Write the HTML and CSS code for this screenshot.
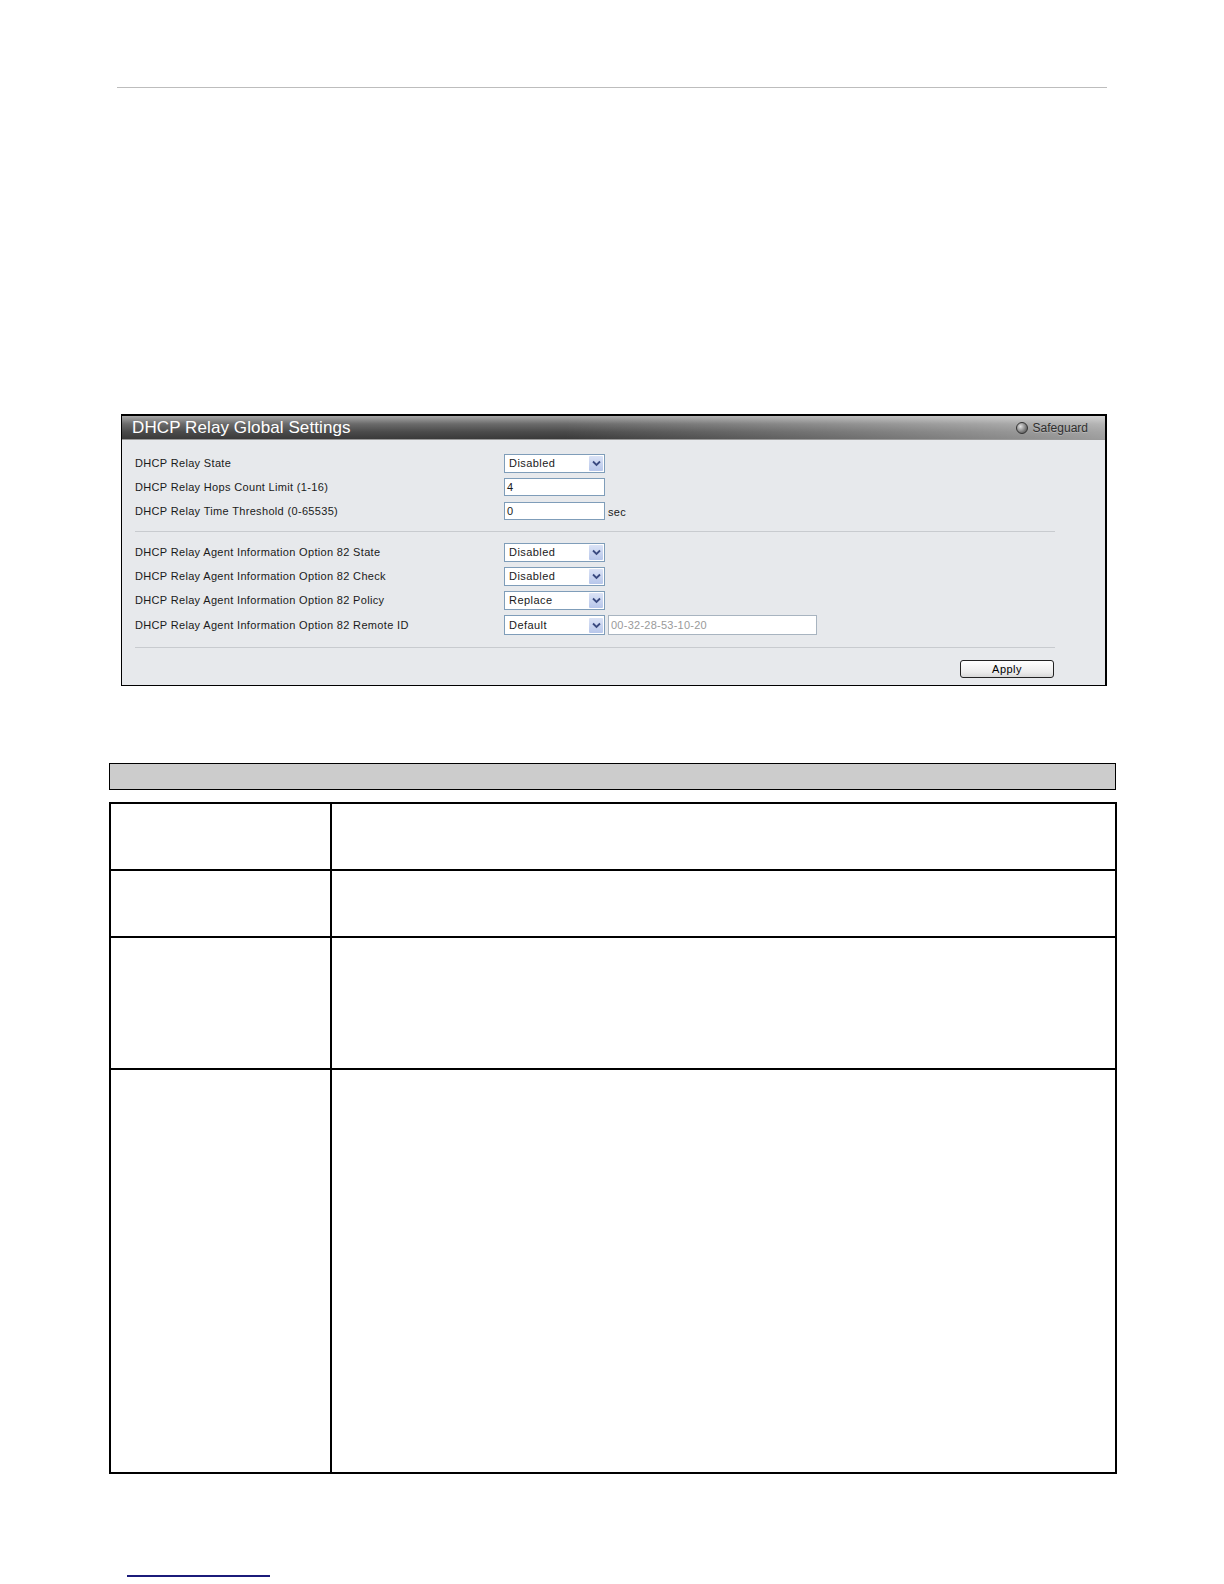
FILE: index.html
```html
<!DOCTYPE html>
<html>
<head>
<meta charset="utf-8">
<link rel="stylesheet" href="styles.css">
</head>
<body>
<div class="page">
  <div class="top-rule"></div>

  <div class="panel">
    <div class="panel-title">
      <span class="title-text">DHCP Relay Global Settings</span>
      <span class="safeguard"><span class="sg-dot"></span>Safeguard</span>
    </div>
    <div class="panel-body">
      <div class="row">
        <div class="label">DHCP Relay State</div>
        <div class="select"><span class="sel-val">Disabled</span><span class="arrow"><svg width="9" height="7" viewBox="0 0 9 7"><path d="M1 1.5 L4.5 5 L8 1.5" fill="none" stroke="#3a4a80" stroke-width="1.8"/></svg></span></div>
      </div>
      <div class="row">
        <div class="label">DHCP Relay Hops Count Limit (1-16)</div>
        <div class="input">4</div>
      </div>
      <div class="row">
        <div class="label">DHCP Relay Time Threshold (0-65535)</div>
        <div class="input">0</div>
        <span class="unit">sec</span>
      </div>
      <div class="sep sep-a"></div>
      <div class="row">
        <div class="label">DHCP Relay Agent Information Option 82 State</div>
        <div class="select"><span class="sel-val">Disabled</span><span class="arrow"><svg width="9" height="7" viewBox="0 0 9 7"><path d="M1 1.5 L4.5 5 L8 1.5" fill="none" stroke="#3a4a80" stroke-width="1.8"/></svg></span></div>
      </div>
      <div class="row">
        <div class="label">DHCP Relay Agent Information Option 82 Check</div>
        <div class="select"><span class="sel-val">Disabled</span><span class="arrow"><svg width="9" height="7" viewBox="0 0 9 7"><path d="M1 1.5 L4.5 5 L8 1.5" fill="none" stroke="#3a4a80" stroke-width="1.8"/></svg></span></div>
      </div>
      <div class="row">
        <div class="label">DHCP Relay Agent Information Option 82 Policy</div>
        <div class="select"><span class="sel-val">Replace</span><span class="arrow"><svg width="9" height="7" viewBox="0 0 9 7"><path d="M1 1.5 L4.5 5 L8 1.5" fill="none" stroke="#3a4a80" stroke-width="1.8"/></svg></span></div>
      </div>
      <div class="row row-tall">
        <div class="label">DHCP Relay Agent Information Option 82 Remote ID</div>
        <div class="select select-tall"><span class="sel-val">Default</span><span class="arrow"><svg width="9" height="7" viewBox="0 0 9 7"><path d="M1 1.5 L4.5 5 L8 1.5" fill="none" stroke="#3a4a80" stroke-width="1.8"/></svg></span></div>
        <div class="input input-wide">00-32-28-53-10-20</div>
      </div>
      <div class="sep sep-b"></div>
      <div class="btn-row">
        <div class="button">Apply</div>
      </div>
    </div>
  </div>

  <div class="grey-bar"></div>

  <div class="desc-table">
    <div class="drow h1"><div class="dcell c1"></div><div class="dcell c2"></div></div>
    <div class="drow h2"><div class="dcell c1"></div><div class="dcell c2"></div></div>
    <div class="drow h3"><div class="dcell c1"></div><div class="dcell c2"></div></div>
    <div class="drow h4"><div class="dcell c1"></div><div class="dcell c2"></div></div>
  </div>

  <div class="footer-link"></div>
</div>
</body>
</html>
```

FILE: styles.css
```css
html, body {
  margin: 0;
  padding: 0;
  background: #ffffff;
}

.page {
  font-family: "Liberation Sans", Arial, sans-serif;
}

.top-rule {
  margin-left: 117px;
  width: 990px;
  padding-top: 87px;
  border-bottom: 1px solid #bdbdbd;
}

.panel {
  margin-top: 326px;
  margin-left: 121px;
  width: 983px;
  border: 1px solid #000;
  border-top: 2px solid #000;
  border-right: 2px solid #000;
  background: #e7e9ec;
}

.panel-title {
  height: 23px;
  display: flex;
  align-items: center;
  justify-content: space-between;
  padding: 0 17px 0 10px;
  background:
    linear-gradient(to right, rgba(255,255,255,0) 45%, rgba(255,255,255,0.5) 100%),
    linear-gradient(to bottom, #a8a8a8 0%, #6a6a6a 35%, #4a4a4a 70%, #3a3a3a 100%);
  border-bottom: 1px solid #9a9a9a;
}

.title-text {
  color: #ffffff;
  font-size: 17px;
  letter-spacing: 0.1px;
}

.safeguard {
  display: flex;
  align-items: center;
  gap: 5px;
  font-size: 12px;
  color: #2e2e2e;
  text-shadow: 0 1px 0 rgba(255,255,255,0.25);
}

.sg-dot {
  width: 10px;
  height: 10px;
  border-radius: 50%;
  background: radial-gradient(circle at 35% 35%, #e0e0e0, #7a7a7a 60%, #444);
  border: 1px solid #333;
}

.panel-body {
  padding: 11px 50px 7px 13px;
}

.row {
  height: 24px;
  display: flex;
  align-items: center;
  font-size: 11px;
  color: #1a1a1a;
}

.row-tall {
  height: 26px;
}

.label {
  width: 369px;
  flex: none;
  letter-spacing: 0.33px;
}

.select {
  width: 99px;
  height: 17px;
  border: 1px solid #7f9db9;
  background: #fff;
  display: flex;
  align-items: center;
  justify-content: space-between;
  box-sizing: content-box;
}

.select-tall {
  height: 18px;
}

.sel-val {
  padding-left: 4px;
  font-size: 11px;
  letter-spacing: 0.45px;
}

.arrow {
  width: 14px;
  height: 15px;
  margin-right: 1px;
  background: linear-gradient(#dbe3f6, #b7c6ea);
  border-radius: 1px;
  display: flex;
  align-items: center;
  justify-content: center;
}

.input {
  width: 97px;
  height: 16px;
  border: 1px solid #7f9db9;
  background: #fff;
  padding-left: 2px;
  font-size: 11px;
  line-height: 16px;
}

.input-wide {
  width: 205px;
  height: 18px;
  line-height: 18px;
  margin-left: 3px;
  color: #9a9a9a;
  border-color: #a8b4c0;
  font-size: 11px;
  letter-spacing: 0.25px;
}

.unit {
  margin-left: 3px;
  font-size: 11px;
  padding-top: 2px;
  letter-spacing: 0.3px;
}

.sep {
  height: 0;
  border-top: 1px solid #c8cbcf;
}

.sep-a {
  margin: 8px 0 8px 0;
}

.sep-b {
  margin: 9px 0 12px 0;
}

.btn-row {
  display: flex;
  justify-content: flex-end;
  padding-right: 1px;
}

.button {
  width: 92px;
  height: 16px;
  border: 1px solid #222;
  border-radius: 3px;
  background: linear-gradient(#ffffff, #ececec 70%, #d8d8d8);
  font-size: 11px;
  text-align: center;
  line-height: 16px;
  letter-spacing: 0.45px;
}

.grey-bar {
  margin-top: 77px;
  margin-left: 109px;
  width: 1005px;
  height: 25px;
  background: #cccccc;
  border: 1px solid #000;
}

.desc-table {
  margin-top: 12px;
  margin-left: 109px;
  width: 1004px;
  border: 2px solid #000;
}

.drow {
  display: flex;
  border-top: 2px solid #000;
}

.drow:first-child {
  border-top: 0;
}

.h1 { height: 65px; }
.h2 { height: 65px; }
.h3 { height: 130px; }
.h4 { height: 402px; }

.dcell {
  height: 100%;
}

.c1 {
  width: 219px;
  border-right: 2px solid #000;
  flex: none;
}

.c2 {
  flex: 1;
}

.footer-link {
  margin-top: 101px;
  margin-left: 127px;
  width: 143px;
  height: 0;
  border-top: 2px solid #1b1b7a;
}
```
